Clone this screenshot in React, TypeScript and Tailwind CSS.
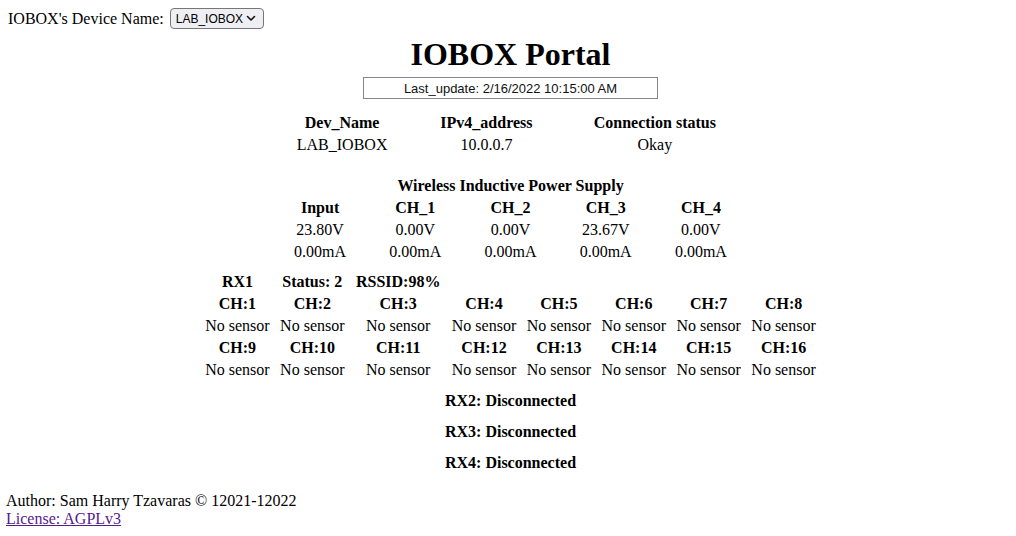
import React from "react";

const serif = { fontFamily: '"Liberation Serif", "Times New Roman", serif' };

function Chevron() {
  return (
    <svg width="10" height="7" viewBox="0 0 10 7" className="block shrink-0">
      <path d="M1.5 1.5 L5 5 L8.5 1.5" fill="none" stroke="#111" strokeWidth="1.6" strokeLinecap="round" strokeLinejoin="round" />
    </svg>
  );
}

const td = "px-[1px] py-[1px] text-center whitespace-nowrap";

export default function App() {
  const chans1 = ["CH:1", "CH:2", "CH:3", "CH:4", "CH:5", "CH:6", "CH:7", "CH:8"];
  const chans2 = ["CH:9", "CH:10", "CH:11", "CH:12", "CH:13", "CH:14", "CH:15", "CH:16"];
  return (
    <div className="min-h-screen bg-white text-black text-[16px] leading-[normal]" style={serif}>
      <div className="flex items-center pl-[8px] pt-[8px] h-[29px]">
        <span>IOBOX's Device Name:</span>
        <div
          className="ml-[6px] flex items-center justify-between w-[94px] h-[21px] rounded-[4px] border border-[#767676] bg-[#efeff3] pl-[5px] pr-[7px] text-[12px] text-black"
          style={{ fontFamily: '"Liberation Sans", Arial, sans-serif' }}
        >
          <span>LAB_IOBOX</span>
          <Chevron />
        </div>
      </div>

      <div className="flex flex-col items-center pl-[13px] pr-[8px]">
        <h1 className="mt-[7px] text-[32px] font-bold leading-[normal]">IOBOX Portal</h1>
        <div
          className="mt-[4px] w-[295px] h-[22px] border border-[#858590] flex items-center justify-center text-[13px] text-[#111]"
          style={{ fontFamily: '"Liberation Sans", Arial, sans-serif' }}
        >
          Last_update: 2/16/2022 10:15:00 AM
        </div>

        <table className="mt-[12px] w-[482px] border-separate border-spacing-[2px]">
          <tbody>
            <tr className="font-bold">
              <td className={td}>Dev_Name</td>
              <td className={td}>IPv4_address</td>
              <td className={td}>Connection status</td>
            </tr>
            <tr>
              <td className={td}>LAB_IOBOX</td>
              <td className={td}>10.0.0.7</td>
              <td className={td}>Okay</td>
            </tr>
          </tbody>
        </table>

        <table className="mt-[17px] w-[478px] border-separate border-spacing-[2px]">
          <tbody>
            <tr className="font-bold">
              <td className={td} colSpan={5}>Wireless Inductive Power Supply</td>
            </tr>
            <tr className="font-bold">
              <td className={td}>Input</td>
              <td className={td}>CH_1</td>
              <td className={td}>CH_2</td>
              <td className={td}>CH_3</td>
              <td className={td}>CH_4</td>
            </tr>
            <tr>
              <td className={td}>23.80V</td>
              <td className={td}>0.00V</td>
              <td className={td}>0.00V</td>
              <td className={td}>23.67V</td>
              <td className={td}>0.00V</td>
            </tr>
            <tr>
              <td className={td}>0.00mA</td>
              <td className={td}>0.00mA</td>
              <td className={td}>0.00mA</td>
              <td className={td}>0.00mA</td>
              <td className={td}>0.00mA</td>
            </tr>
          </tbody>
        </table>

        <table className="mt-[6px] w-[623px] border-separate border-spacing-[2px]">
          <tbody>
            <tr className="font-bold">
              <td className={td}>RX1</td>
              <td className={td}>Status: 2</td>
              <td className={td}>RSSID:98%</td>
              <td className={td}></td>
              <td className={td}></td>
              <td className={td}></td>
              <td className={td}></td>
              <td className={td}></td>
            </tr>
            <tr className="font-bold">
              {chans1.map((c) => (
                <td key={c} className={td}>{c}</td>
              ))}
            </tr>
            <tr>
              {chans1.map((c) => (
                <td key={c} className={td}>No sensor</td>
              ))}
            </tr>
            <tr className="font-bold">
              {chans2.map((c) => (
                <td key={c} className={td}>{c}</td>
              ))}
            </tr>
            <tr>
              {chans2.map((c) => (
                <td key={c} className={td}>No sensor</td>
              ))}
            </tr>
          </tbody>
        </table>

        <div className="mt-[10px] flex flex-col items-center gap-[13px] font-bold">
          <div>RX2: Disconnected</div>
          <div>RX3: Disconnected</div>
          <div>RX4: Disconnected</div>
        </div>
      </div>

      <div className="mt-[20px] pl-[6px]">
        <div>Author: Sam Harry Tzavaras © 12021-12022</div>
        <a href="#" className="text-[#551a8b] underline">License: AGPLv3</a>
      </div>
    </div>
  );
}
